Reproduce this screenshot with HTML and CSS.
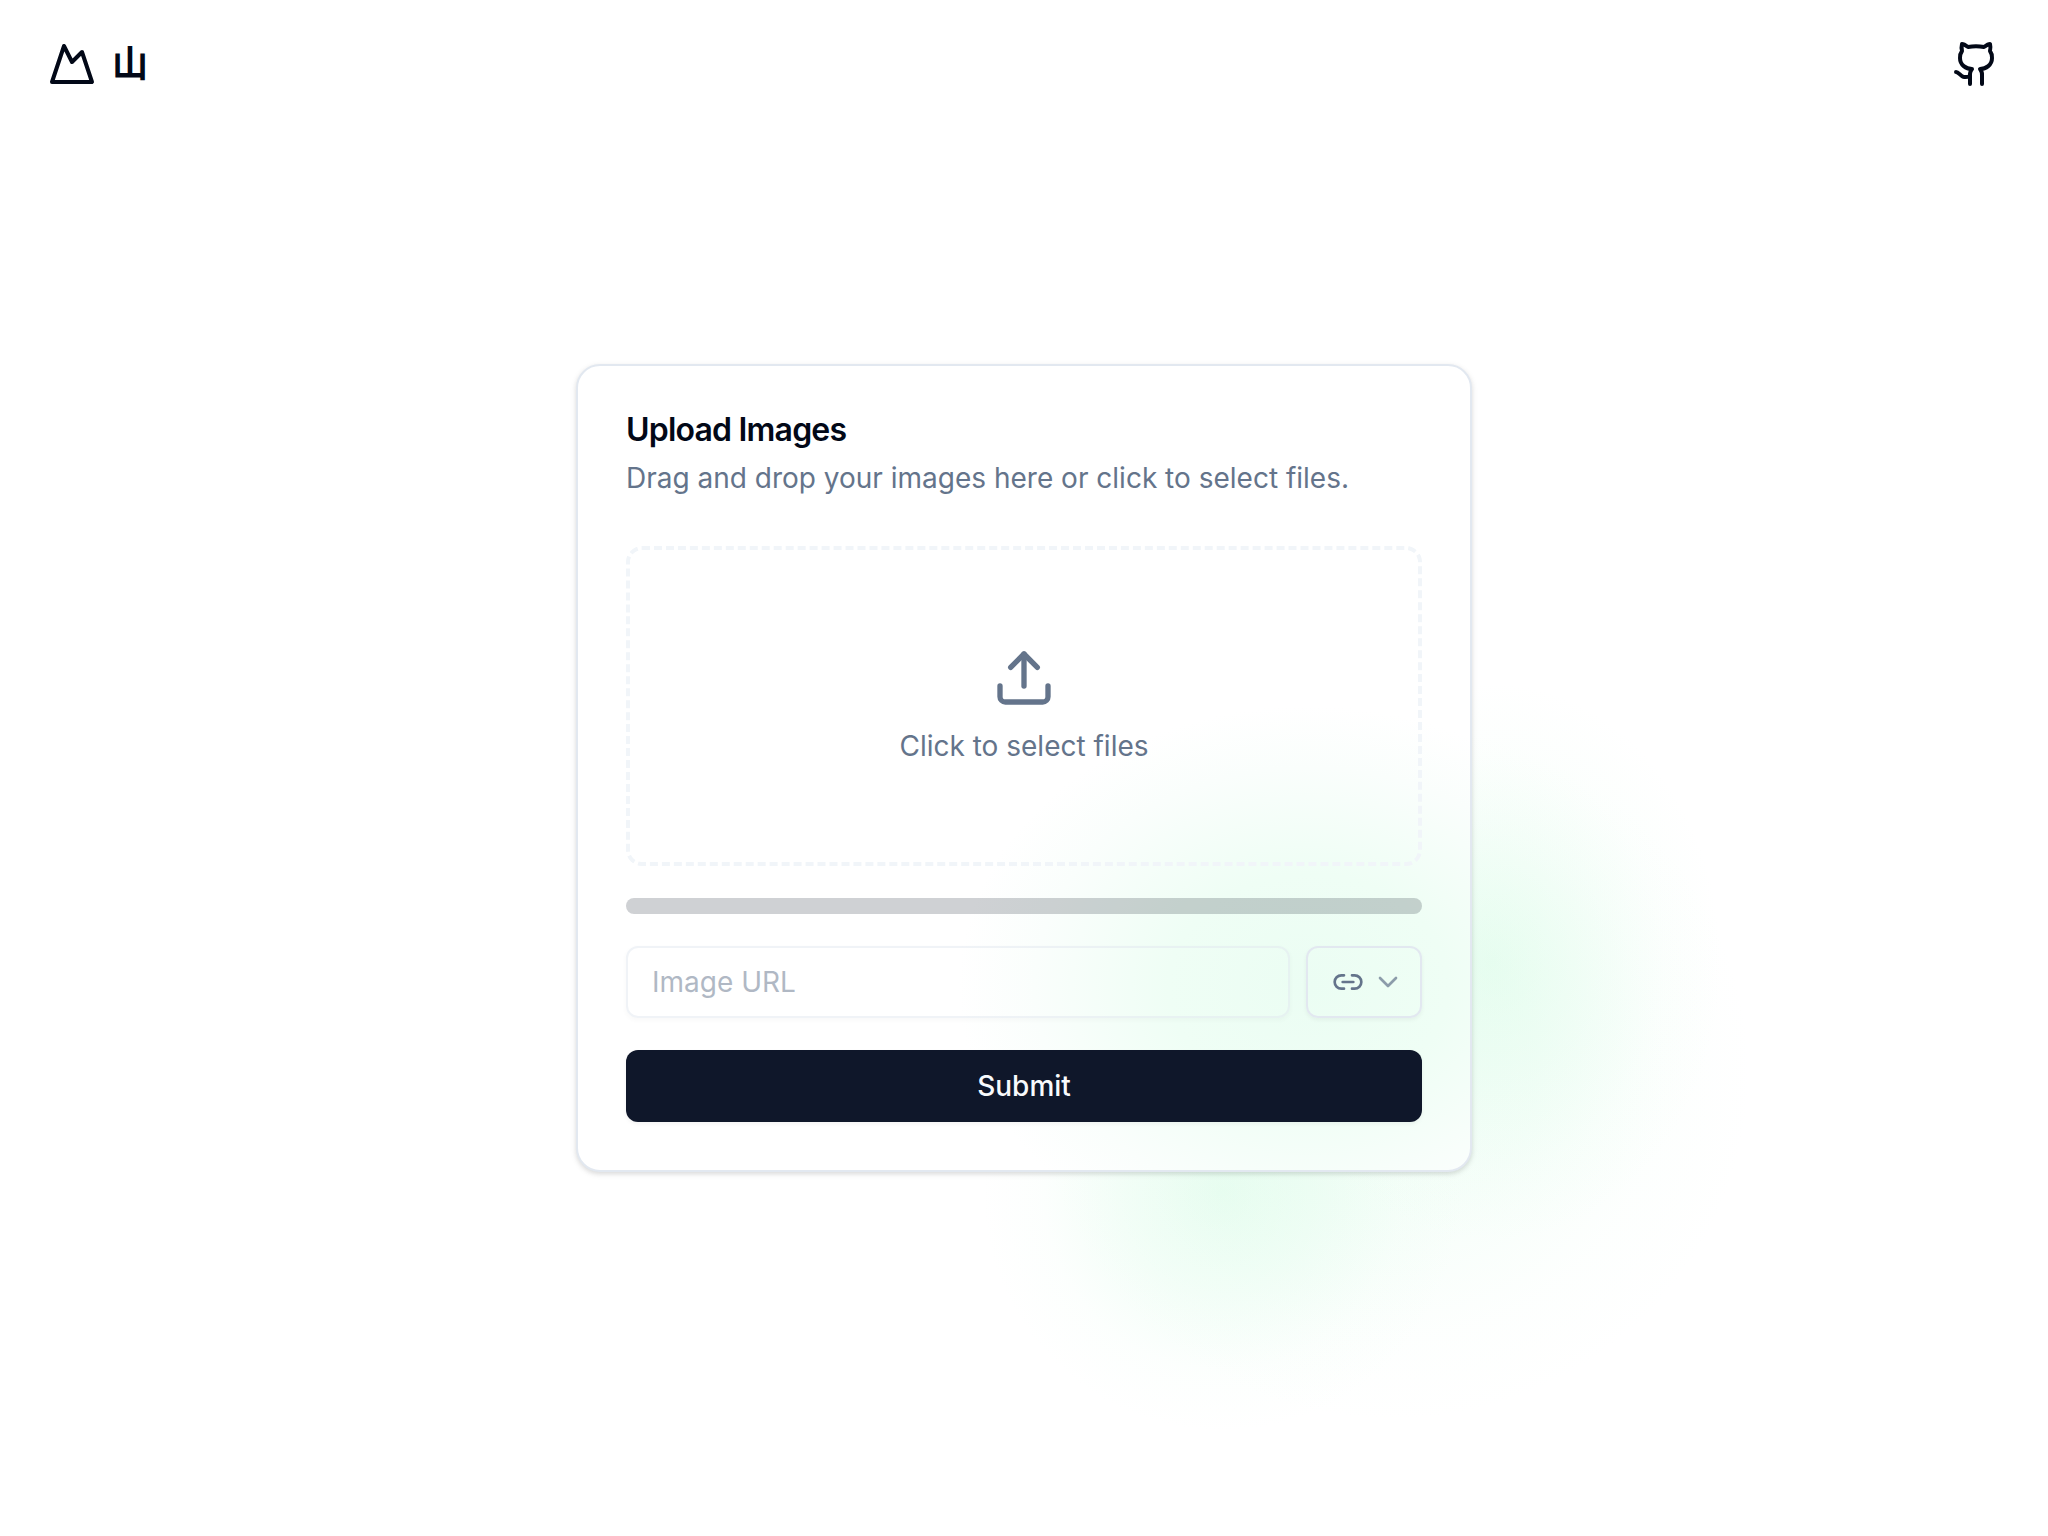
FILE: index.html
```html
<!DOCTYPE html>
<html lang="en">
<head>
<meta charset="utf-8">
<meta name="viewport" content="width=device-width, initial-scale=1">
<title>山 – Upload Images</title>
<link rel="stylesheet" href="styles.css">
</head>
<body>
<header class="topbar">
  <a class="brand" href="#">
    <svg class="icon icon-lg" viewBox="0 0 24 24" aria-hidden="true"><path d="m8 3 4 8 5-5 5 15H2L8 3z"/></svg>
    <span class="brand-name">山</span>
  </a>
  <a class="repo" href="#" aria-label="GitHub">
    <svg class="icon icon-lg" viewBox="0 0 24 24" aria-hidden="true"><path d="M15 22v-4a4.8 4.8 0 0 0-1-3.5c3 0 6-2 6-5.5.08-1.25-.27-2.48-1-3.5.28-1.15.28-2.35 0-3.5 0 0-1 0-3 1.5-2.64-.5-5.36-.5-8 0C6 2 5 2 5 2c-.3 1.15-.3 2.35 0 3.5A5.403 5.403 0 0 0 4 9c0 3.5 3 5.5 6 5.5-.39.49-.68 1.05-.85 1.65-.17.6-.22 1.23-.15 1.85v4"/><path d="M9 18c-4.51 2-5-2-7-2"/></svg>
  </a>
</header>
<main class="stage">
  <div class="card-wrap">
    <div class="glow" aria-hidden="true"></div>
    <form class="card">
      <div class="card-header">
        <h1 class="title">Upload Images</h1>
        <p class="description">Drag and drop your images here or click to select files.</p>
      </div>
      <label class="dropzone">
        <input class="hidden-control" type="file" accept="image/*" multiple>
        <svg class="icon icon-xl" viewBox="0 0 24 24" aria-hidden="true"><path d="M21 15v4a2 2 0 0 1-2 2H5a2 2 0 0 1-2-2v-4"/><path d="m17 8-5-5-5 5"/><path d="M12 3v12"/></svg>
        <span>Click to select files</span>
      </label>
      <div class="progress" role="progressbar" aria-label="Upload progress" aria-valuenow="0" aria-valuemin="0" aria-valuemax="100"></div>
      <div class="url-row">
        <input class="url-input" type="url" placeholder="Image URL" aria-label="Image URL" disabled>
        <label class="picker">
          <svg class="icon icon-sm" viewBox="0 0 24 24" aria-hidden="true"><path d="M9 17H7A5 5 0 0 1 7 7h2"/><path d="M15 7h2a5 5 0 1 1 0 10h-2"/><path d="M8 12h8"/></svg>
          <svg class="icon icon-sm chevron" viewBox="0 0 24 24" aria-hidden="true"><path d="m6 9 6 6 6-6"/></svg>
          <select class="hidden-control" aria-label="Link format">
            <option>URL</option>
            <option>Markdown</option>
            <option>HTML</option>
          </select>
        </label>
      </div>
      <button class="submit" type="submit">Submit</button>
    </form>
  </div>
</main>
</body>
</html>
```
FILE: styles.css
```css
:root {
  --ink: #020817;
  --muted: #64748b;
  --line: #e2e8f0;
  --primary: #0f172a;
  --shadow-sm: 0 2px 4px rgb(0 0 0 / 0.05);
}

*, *::before, *::after { box-sizing: border-box; }

body {
  margin: 0;
  min-height: 100vh;
  display: flex;
  flex-direction: column;
  background: #fff;
  color: var(--ink);
  font-family: Inter, "Noto Sans CJK SC", sans-serif;
  font-size: 28px;
  line-height: 40px;
  overflow-x: hidden;
}

.icon {
  display: block;
  flex: none;
  fill: none;
  stroke: currentColor;
  stroke-width: 2;
  stroke-linecap: round;
  stroke-linejoin: round;
}
.icon-sm { width: 32px; height: 32px; }
.icon-lg { width: 48px; height: 48px; }
.icon-xl { width: 64px; height: 64px; }

.topbar {
  display: flex;
  align-items: center;
  justify-content: space-between;
  height: 128px;
  padding: 0 48px;
}
.topbar a { color: inherit; text-decoration: none; }
.brand { display: flex; align-items: center; gap: 16px; }
.brand-name { font-size: 36px; font-weight: 700; line-height: 56px; }

.stage {
  flex: 1;
  display: flex;
  align-items: center;
  justify-content: center;
  padding: 0 48px 128px;
}
.card-wrap { position: relative; width: 100%; max-width: 896px; }

/* soft green light behind the lower right corner of the card */
.glow {
  position: absolute;
  right: -320px;
  bottom: -270px;
  width: 860px;
  height: 760px;
  background:
    radial-gradient(closest-side, rgb(200 250 220 / 0.36), rgb(200 250 220 / 0.2) 40%, rgb(200 250 220 / 0.05) 75%, transparent) 330px 0 / 460px 560px no-repeat,
    radial-gradient(closest-side, rgb(200 250 220 / 0.38), rgb(200 250 220 / 0.22) 40%, rgb(200 250 220 / 0.05) 75%, transparent) 50px 270px / 480px 480px no-repeat,
    radial-gradient(closest-side, rgb(200 250 220 / 0.2), rgb(200 250 220 / 0.15) 40%, rgb(200 250 220 / 0.04) 75%, transparent) 100px 40px / 720px 700px no-repeat;
}

.card {
  position: relative;
  display: flex;
  flex-direction: column;
  gap: 32px;
  padding: 48px;
  border: 2px solid var(--line);
  border-radius: 24px;
  background:
    radial-gradient(350px 280px at 730px 620px, #ebfdf3, #effef5 40%, #fafefc 78%, #fff),
    #fff;
  box-shadow: 0 2px 6px rgb(0 0 0 / 0.1), 0 2px 4px rgb(0 0 0 / 0.06);
}
.card-header { display: flex; flex-direction: column; gap: 12px; margin-bottom: 16px; }
.title {
  margin: 0;
  font-size: 32px;
  font-weight: 600;
  line-height: 32px;
  letter-spacing: -0.025em;
}
.description { margin: 0; color: var(--muted); }

.dropzone {
  position: relative;
  display: flex;
  flex-direction: column;
  align-items: center;
  justify-content: center;
  gap: 16px;
  height: 320px;
  border: 4px dashed #f1f5f9;
  border-radius: 16px;
  color: var(--muted);
  cursor: pointer;
}
.hidden-control {
  position: absolute;
  inset: 0;
  width: 100%;
  height: 100%;
  opacity: 0;
  cursor: pointer;
}

.progress { height: 16px; border-radius: 8px; background: rgb(15 23 42 / 0.2); }

.url-row { display: flex; gap: 16px; }
.url-input {
  flex: 1;
  min-width: 0;
  height: 72px;
  padding: 0 24px;
  border: 2px solid var(--line);
  border-radius: 12px;
  background: transparent;
  box-shadow: var(--shadow-sm);
  font: inherit;
  opacity: 0.5;
}
.url-input::placeholder { color: var(--muted); opacity: 1; }

.picker {
  position: relative;
  display: flex;
  align-items: center;
  gap: 8px;
  height: 72px;
  padding: 0 16px 0 24px;
  border: 2px solid var(--line);
  border-radius: 12px;
  box-shadow: var(--shadow-sm);
  color: var(--muted);
}
.chevron { opacity: 0.7; }

.submit {
  height: 72px;
  border: 0;
  border-radius: 12px;
  background: var(--primary);
  box-shadow: var(--shadow-sm);
  color: #f8fafc;
  font: inherit;
  font-weight: 500;
  cursor: pointer;
}
```
